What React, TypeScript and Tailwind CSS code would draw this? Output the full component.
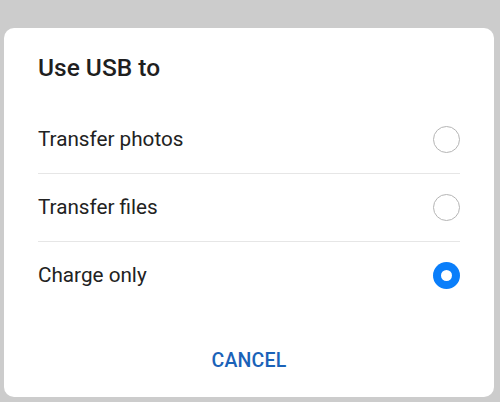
import React from 'react';

const options = [
  { label: 'Transfer photos', selected: false },
  { label: 'Transfer files', selected: false },
  { label: 'Charge only', selected: true },
];

function Radio({ selected }: { selected: boolean }) {
  if (selected) {
    return (
      <span className="flex h-[27px] w-[27px] items-center justify-center rounded-full bg-[#0a7efa]">
        <span className="h-[11px] w-[11px] rounded-full bg-white" />
      </span>
    );
  }
  return <span className="h-[27px] w-[27px] rounded-full border-[1.5px] border-[#b5b5b5] bg-white" />;
}

export default function App() {
  return (
    <div className="h-[402px] w-[500px] overflow-hidden bg-[#cccccc] pl-[4px] pt-[28px] font-['Roboto',sans-serif]">
      <div className="flex h-[369px] w-[490px] flex-col rounded-[10px] bg-white px-[34px] pt-[24px] pb-[24px]">
        <h1 className="text-[24.5px] leading-[32px] font-medium text-[#1f1f1f]">Use USB to</h1>

        <div className="mt-[22px] flex flex-col">
          {options.map((o, i) => (
            <div key={o.label} className={i > 0 ? 'border-t border-[#e6e6e6]' : ''}>
              <div className="flex h-[67px] items-center justify-between">
                <span className="text-[20.7px] text-[#222222]">{o.label}</span>
                <Radio selected={o.selected} />
              </div>
            </div>
          ))}
        </div>

        <div className="mt-auto flex justify-center">
          <button className="text-[19.5px] leading-[24px] font-medium tracking-[0.2px] text-[#1a62b8]">CANCEL</button>
        </div>
      </div>
    </div>
  );
}
